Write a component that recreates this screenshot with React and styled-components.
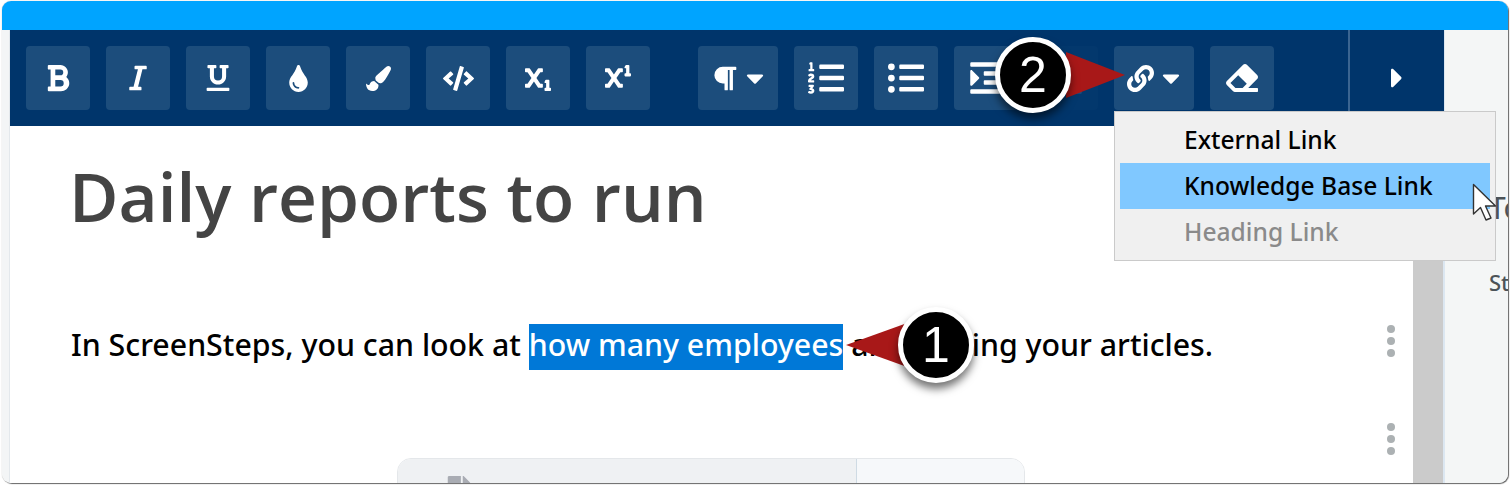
import React from 'react';
import styled, { createGlobalStyle } from 'styled-components';
import {
  FaBold, FaItalic, FaUnderline, FaTint, FaPaintBrush, FaCode, FaSubscript, FaSuperscript,
  FaParagraph, FaListOl, FaListUl, FaIndent, FaOutdent, FaLink, FaEraser, FaCaretDown, FaCaretRight, FaFile,
} from 'react-icons/fa';

const GlobalStyle = createGlobalStyle`
  html, body { margin: 0; padding: 0; background: #fff; overflow: hidden; }
  * { box-sizing: border-box; }
`;

const Page = styled.div`
  position: relative;
  width: 1510px;
  height: 486px;
  padding: 1px 2px 3px 2px;
  background: #fff;
  overflow: hidden;
  font-family: "Noto Sans", "Open Sans", sans-serif;
`;

const Frame = styled.div`
  display: flex;
  flex-direction: column;
  height: 100%;
  border-radius: 9px;
  overflow: hidden;
  box-shadow: 1px 1px 1px 0 #666, 0 0 1px 0 #999;
`;

const BlueBar = styled.div`
  flex: 0 0 29px;
  background: #00a4ff;
`;

const Body = styled.div`
  flex: 1;
  display: flex;
  min-height: 0;
`;

const LeftStrip = styled.div`
  flex: 0 0 8px;
  background: #f3f5f6;
  border-right: 1px solid #e3e8ec;
`;

const Main = styled.div`
  flex: 0 0 1434px;
  display: flex;
  flex-direction: column;
  min-height: 0;
`;

const Toolbar = styled.div`
  flex: 0 0 96px;
  display: flex;
  align-items: center;
  padding-left: 16px;
  background: #00356b;
`;

const ButtonGroup = styled.div`
  display: flex;
  gap: 16px;
  margin-right: ${(p) => p.$after || 0}px;
`;

const ToolButton = styled.div`
  display: flex;
  align-items: center;
  justify-content: center;
  gap: 8px;
  width: ${(p) => (p.$wide ? 80 : 64)}px;
  height: 64px;
  border-radius: 4px;
  color: #fff;
  font-size: ${(p) => p.$size || 24}px;
  background: #1c4d7c;
  opacity: ${(p) => (p.$dim ? 0.12 : 1)};
`;

const Caret = styled(FaCaretDown)`
  font-size: 28px;
  margin: 0 -3px 0 -5px;
`;

const ToolbarEnd = styled.div`
  flex: 1;
  display: flex;
  align-items: center;
  justify-content: center;
  align-self: stretch;
  margin-left: 74px;
  color: #fff;
  font-size: 32px;
  border-left: 2px solid #3b6591;
`;

const Workspace = styled.div`
  flex: 1;
  display: flex;
  min-height: 0;
`;

const Editor = styled.div`
  flex: 0 0 1403px;
  padding-left: 61px;
  background: #fff;
  overflow: hidden;
`;

const Title = styled.h1`
  margin: 24px 0 0 -2px;
  font-family: "Open Sans", "Noto Sans", sans-serif;
  font-size: 67.5px;
  line-height: 92px;
  font-weight: 600;
  color: #444;
`;

const Row = styled.div`
  display: flex;
  align-items: flex-start;
  justify-content: space-between;
  height: ${(p) => p.$height}px;
  padding-right: 18px;
  margin-top: ${(p) => p.$top}px;
`;

const Paragraph = styled.p`
  margin: 0;
  font-size: 30.3px;
  font-weight: 500;
  line-height: 42px;
  color: #000;
  white-space: nowrap;
`;

const Selected = styled.span`
  display: inline-block;
  padding-bottom: 4px;
  background: #0078d7;
  color: #fff;
`;

const Kebab = styled.div`
  display: flex;
  flex-direction: column;
  gap: 4px;
  margin-top: ${(p) => p.$top || 0}px;
  & > i {
    display: block;
    width: 8px;
    height: 8px;
    border-radius: 50%;
    background: #acb1b3;
  }
`;

const Card = styled.div`
  display: flex;
  width: 628px;
  height: 80px;
  margin: 3px 0 0 326px;
  border: 1px solid #e4e7ea;
  border-radius: 14px;
  overflow: hidden;
`;

const CardMain = styled.div`
  flex: 0 0 459px;
  padding: 15px 0 0 46px;
  background: #eff1f3;
  color: #a9acb3;
  font-size: 30px;
  border-right: 1px solid #cfdbe4;
`;

const CardSide = styled.div`
  flex: 1;
  background: #f6f8fa;
`;

const Scrollbar = styled.div`
  flex: 1;
  background: #cbcbcb;
  border-right: 1px solid #dce7f1;
`;

const RightPanel = styled.div`
  flex: 1;
  padding: 158px 0 0 44px;
  background: #f4f6f6;
  border-left: 1px solid #dce7f1;
  color: #4c5358;
  overflow: hidden;
  white-space: nowrap;
`;

const PanelTitle = styled.div`
  font-size: 30px;
  line-height: 40px;
`;

const PanelText = styled.div`
  margin-top: 39px;
  font-size: 22px;
  font-weight: 500;
  line-height: 30px;
`;

const Menu = styled.div`
  position: absolute;
  left: 1114px;
  top: 111px;
  width: 382px;
  height: 150px;
  padding: 5px;
  background: #f0f0f0;
  border: 1px solid #cacaca;
`;

const MenuItem = styled.div`
  height: 46px;
  padding-left: 64px;
  font-size: 24.6px;
  font-weight: 500;
  line-height: 46px;
  color: ${(p) => (p.$disabled ? '#8a8a8a' : '#000')};
  background: ${(p) => (p.$active ? '#80c8ff' : 'transparent')};
`;

const Callout = styled.div`
  position: absolute;
  left: ${(p) => p.$x}px;
  top: ${(p) => p.$y}px;
  width: 76px;
  height: 76px;
  display: flex;
  align-items: center;
  justify-content: center;
  border: 5px solid #fff;
  border-radius: 50%;
  background: #000;
  color: #fff;
  font-family: "Liberation Sans", Arial, sans-serif;
  font-size: 50px;
  box-shadow: 0 6px 9px rgba(0, 0, 0, 0.55);
`;

const Overlay = styled.svg`
  position: absolute;
  left: ${(p) => p.$x}px;
  top: ${(p) => p.$y}px;
`;

const items = [
  { Icon: FaBold, size: 30 }, { Icon: FaItalic, size: 28 }, { Icon: FaUnderline, size: 26 }, { Icon: FaTint, size: 27 },
  { Icon: FaPaintBrush, size: 25 }, { Icon: FaCode, size: 31 }, { Icon: FaSubscript, size: 26 }, { Icon: FaSuperscript, size: 26 },
];

export default function App() {
  return (
    <Page>
      <GlobalStyle />
      <Frame>
        <BlueBar />
        <Body>
          <LeftStrip />
          <Main>
            <Toolbar>
              <ButtonGroup $after={48}>
                {items.map(({ Icon, size }, i) => (
                  <ToolButton key={i} $size={size}><Icon /></ToolButton>
                ))}
              </ButtonGroup>
              <ButtonGroup>
                <ToolButton $wide $size={27}><FaParagraph /><Caret /></ToolButton>
                <ToolButton $size={36}><FaListOl /></ToolButton>
                <ToolButton $size={36}><FaListUl /></ToolButton>
                <ToolButton $size={36}><FaIndent /></ToolButton>
                <ToolButton $size={36} $dim><FaOutdent /></ToolButton>
                <ToolButton $wide $size={27}><FaLink /><Caret /></ToolButton>
                <ToolButton $size={32}><FaEraser /></ToolButton>
              </ButtonGroup>
              <ToolbarEnd><FaCaretRight /></ToolbarEnd>
            </Toolbar>
            <Workspace>
              <Editor>
                <Title>Daily reports to run</Title>
                <Row $top={82} $height={46}>
                  <Paragraph>
                    In ScreenSteps, you can look at <Selected>how many employees</Selected> are reading your articles.
                  </Paragraph>
                  <Kebab $top={1}><i /><i /><i /></Kebab>
                </Row>
                <Row $top={53} $height={32}>
                  <span />
                  <Kebab><i /><i /><i /></Kebab>
                </Row>
                <Card>
                  <CardMain><FaFile /></CardMain>
                  <CardSide />
                </Card>
              </Editor>
              <Scrollbar />
            </Workspace>
          </Main>
          <RightPanel>
            <PanelTitle>To</PanelTitle>
            <PanelText>St</PanelText>
          </RightPanel>
        </Body>
      </Frame>

      <Menu>
        <MenuItem>External Link</MenuItem>
        <MenuItem $active>Knowledge Base Link</MenuItem>
        <MenuItem $disabled>Heading Link</MenuItem>
      </Menu>

      <Overlay $x={1472} $y={183} width="28" height="40" viewBox="0 0 28 40">
        <path d="M1.5 1.5 V31 L8.5 24.5 L14 37 L19 35 L13.5 23 H23.5 Z" fill="#fff" stroke="#333" strokeWidth="1.4" strokeLinejoin="round" />
      </Overlay>

      <Overlay $x={844} $y={318} width="70" height="54" viewBox="0 0 70 54">
        <polygon points="2,27 66,4 66,50" fill="#a81818" />
      </Overlay>
      <Callout $x={898} $y={307}>1</Callout>

      <Overlay $x={1060} $y={48} width="70" height="54" viewBox="0 0 70 54">
        <polygon points="65,27 6,4 6,50" fill="#a81818" />
      </Overlay>
      <Callout $x={995} $y={37}>2</Callout>
    </Page>
  );
}
